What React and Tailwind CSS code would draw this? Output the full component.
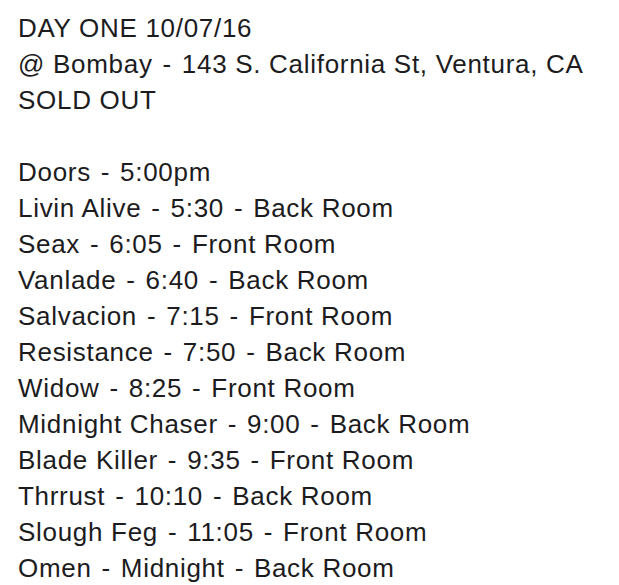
import React from "react";

const lines = [
  "DAY ONE 10/07/16",
  "@ Bombay - 143 S. California St, Ventura, CA",
  "SOLD OUT",
  "",
  "Doors - 5:00pm",
  "Livin Alive - 5:30 - Back Room",
  "Seax - 6:05 - Front Room",
  "Vanlade - 6:40 - Back Room",
  "Salvacion - 7:15 - Front Room",
  "Resistance - 7:50 - Back Room",
  "Widow - 8:25 - Front Room",
  "Midnight Chaser - 9:00 - Back Room",
  "Blade Killer - 9:35 - Front Room",
  "Thrrust - 10:10 - Back Room",
  "Slough Feg - 11:05 - Front Room",
  "Omen - Midnight - Back Room",
];

// the dashes sit a bit wider in the original font
const renderLine = (line) =>
  line.split(" - ").map((part, i) => (
    <React.Fragment key={i}>
      {i > 0 && <span className="px-[2px]"> - </span>}
      {part}
    </React.Fragment>
  ));

export default function App() {
  return (
    <div className="w-[619px] h-[585px] overflow-hidden bg-white pl-[18px] pt-[10px] text-[#1c1c1e] font-['Liberation_Sans',Arial,sans-serif] text-[26px] tracking-[0.7px] leading-[36px]">
      {lines.map((line, idx) => (
        <div key={idx} className="whitespace-nowrap h-[36px]">
          {renderLine(line)}
        </div>
      ))}
    </div>
  );
}
